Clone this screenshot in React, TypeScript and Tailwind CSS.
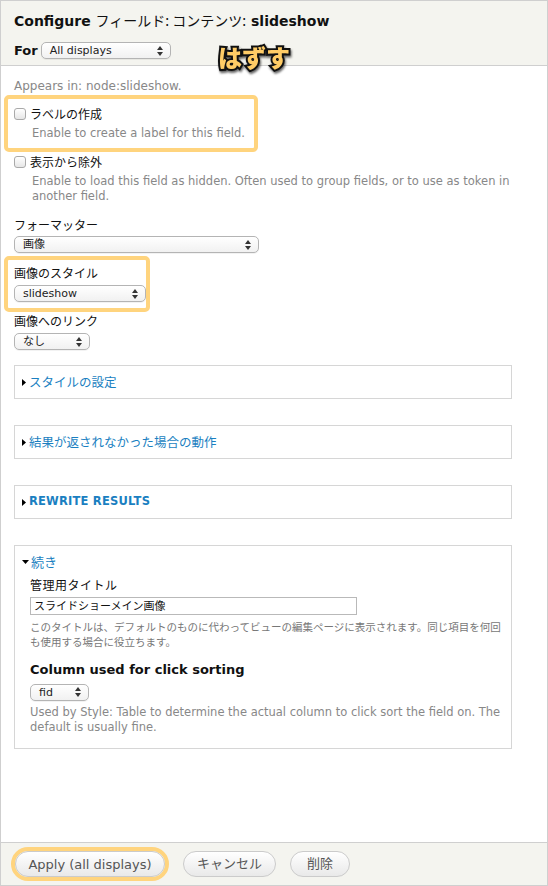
const latin = "font-['DejaVu_Sans','Noto_Sans_CJK_JP',sans-serif]";
const jp = "font-['Noto_Sans_CJK_JP','DejaVu_Sans',sans-serif]";

function Arrows() {
  return (
    <svg width="6" height="10" viewBox="0 0 6 10" className="shrink-0">
      <path d="M0 4 L3 0 L6 4 Z" fill="#333" />
      <path d="M0 6 L3 10 L6 6 Z" fill="#333" />
    </svg>
  );
}

function Select({ label, width }: { label: string; width: string }) {
  return (
    <div
      className={`${width} h-[17px] flex items-center justify-between pl-[8px] pr-[7px] rounded-[5px] border border-[#b4b4b4] bg-gradient-to-b from-white to-[#f1f1f1] shadow-[0_1px_0_rgba(0,0,0,0.05)] text-[11px] text-[#222] ${latin}`}
    >
      <span className="leading-none">{label}</span>
      <Arrows />
    </div>
  );
}

function Checkbox() {
  return (
    <span className="w-[12px] h-[12px] rounded-[3px] border border-[#a9a9a9] bg-gradient-to-b from-white to-[#e6e6e6] shrink-0" />
  );
}

function Fieldset({ title, bold }: { title: string; bold?: boolean }) {
  return (
    <div className="h-[34px] border border-[#d6d6d6] flex items-center pl-[7px]">
      <svg width="4" height="7" viewBox="0 0 4 7" className="mr-[3px]">
        <path d="M0 0 L4 3.5 L0 7 Z" fill="#000" />
      </svg>
      <span
        className={`text-[#1a7fc1] ${bold ? `text-[11.5px] font-bold tracking-[0.2px] ${latin}` : `text-[12.5px] ${jp}`}`}
      >
        {title}
      </span>
    </div>
  );
}

function Button({ label, width }: { label: string; width: string }) {
  return (
    <button
      className={`${width} h-[26px] rounded-full border border-[#cbcbcb] bg-gradient-to-b from-white to-[#e9e9e9] text-[13px] text-[#555] ${latin}`}
    >
      {label}
    </button>
  );
}

export default function App() {
  return (
    <div className="relative w-[548px] h-[886px] bg-white border border-[#cfcfcf] flex flex-col overflow-hidden">
      {/* header */}
      <div className="h-[65px] bg-[#f4f4ef] border-b border-[#cfcfcf] px-[13px] pt-[8px] shrink-0">
        <h1 className={`text-[14px] font-bold text-[#111] leading-[22px] ${latin}`}>
          Configure <span className={`font-normal ${jp}`}>フィールド: コンテンツ:</span> slideshow
        </h1>
        <div className="flex items-center gap-[3px] mt-[9px]">
          <span className={`text-[13px] font-bold text-[#111] ${latin}`}>For</span>
          <Select label="All displays" width="w-[130px]" />
        </div>
      </div>

      {/* annotation */}
      <div
        className={`absolute left-[217px] top-[38px] text-[24px] font-black text-[#ffcc66] [paint-order:stroke_fill] [-webkit-text-stroke:4px_#111] drop-shadow-[1px_2px_1px_rgba(0,0,0,0.6)] ${jp}`}
      >
        はずす
      </div>

      {/* body */}
      <div className="flex-1 pl-[13px] pr-[35px] pt-[12px]">
        <p className={`text-[12px] text-[#888] leading-[16px] ${latin}`}>Appears in: node:slideshow.</p>

        <div className="-ml-[10px] w-[254px] mt-[1px] border-4 border-[#ffd47e] rounded-[5px] pl-[6px] pt-[6px] pb-[7px]">
          <div className="flex items-center gap-[4px] h-[17px]">
            <Checkbox />
            <span className={`text-[12px] text-[#111] ${jp}`}>ラベルの作成</span>
          </div>
          <p className={`mt-[4px] pl-[18px] text-[11.5px] text-[#888] leading-[15px] ${latin}`}>
            Enable to create a label for this field.
          </p>
        </div>

        <div className="flex items-center gap-[4px] h-[17px] mt-[1px]">
          <Checkbox />
          <span className={`text-[12px] text-[#111] ${jp}`}>表示から除外</span>
        </div>
        <p className={`mt-[4px] pl-[18px] text-[11.5px] text-[#888] leading-[15px] ${latin}`}>
          Enable to load this field as hidden. Often used to group fields, or to use as token in another field.
        </p>

        <p className={`mt-[12px] text-[12px] text-[#111] leading-[18px] ${jp}`}>フォーマッター</p>
        <div className="mt-[2px]">
          <Select label="画像" width="w-[245px]" />
        </div>

        <div className="-ml-[10px] w-[146px] mt-[3px] border-4 border-[#ffd47e] rounded-[5px] pl-[6px] pt-[4px] pb-[6px]">
          <p className={`text-[12px] text-[#111] leading-[18px] ${jp}`}>画像のスタイル</p>
          <div className="mt-[3px]">
            <Select label="slideshow" width="w-[132px]" />
          </div>
        </div>

        <p className={`mt-[0px] text-[12px] text-[#111] leading-[18px] ${jp}`}>画像へのリンク</p>
        <div className="mt-[3px]">
          <Select label="なし" width="w-[76px]" />
        </div>

        <div className="mt-[15px] flex flex-col gap-[26px]">
          <Fieldset title="スタイルの設定" />
          <Fieldset title="結果が返されなかった場合の動作" />
          <Fieldset title="REWRITE RESULTS" bold />

          <div className="h-[204px] border border-[#d6d6d6] pl-[7px] pt-[6px] pr-[6px]">
            <div className="flex items-center">
              <svg width="7" height="4" viewBox="0 0 7 4" className="mr-[2px]">
                <path d="M0 0 L7 0 L3.5 4 Z" fill="#000" />
              </svg>
              <span className={`text-[13px] text-[#1a7fc1] ${jp}`}>続き</span>
            </div>
            <div className="pl-[8px]">
              <p className={`mt-[4px] text-[12px] text-[#111] leading-[18px] tracking-[0.5px] ${jp}`}>管理用タイトル</p>
              <div className={`mt-[3px] w-[327px] h-[18px] border border-[#b9b9b9] flex items-center pl-[3px] text-[11px] text-[#111] ${jp}`}>
                スライドショーメイン画像
              </div>
              <p className={`mt-[4px] text-[10.5px] text-[#777] leading-[15px] ${jp}`}>
                このタイトルは、デフォルトのものに代わってビューの編集ページに表示されます。同じ項目を何回も使用する場合に役立ちます。
              </p>
              <p className={`mt-[12px] text-[13px] font-bold text-[#111] leading-[18px] ${latin}`}>
                Column used for click sorting
              </p>
              <div className="mt-[5px]">
                <Select label="fid" width="w-[59px]" />
              </div>
              <p className={`mt-[4px] text-[11.5px] text-[#888] leading-[15px] ${latin}`}>
                Used by Style: Table to determine the actual column to click sort the field on. The default is usually fine.
              </p>
            </div>
          </div>
        </div>
      </div>

      {/* footer */}
      <div className="h-[43px] bg-[#f4f4ef] border-t border-[#cfcfcf] shrink-0 flex items-center pl-[10px] gap-[14px]">
        <div className="border-4 border-[#ffd47e] rounded-full">
          <Button label="Apply (all displays)" width="w-[150px]" />
        </div>
        <Button label="キャンセル" width="w-[93px]" />
        <Button label="削除" width="w-[60px]" />
      </div>
    </div>
  );
}
